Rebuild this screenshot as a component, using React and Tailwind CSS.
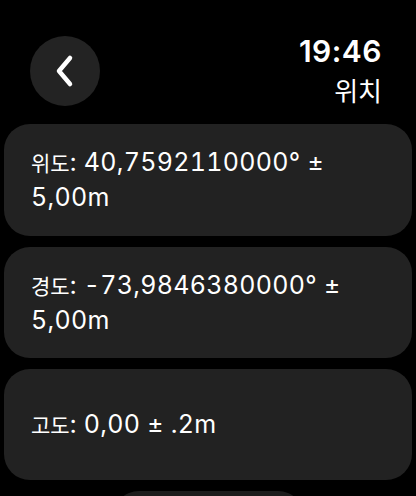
export default function App() {
  return (
    <div className="w-[416px] h-[496px] bg-black overflow-hidden text-white font-['Inter','Noto_Sans_CJK_KR',sans-serif]">
      <div className="flex justify-between items-start pl-[30px] pr-[34px] pt-[36px] h-[124px]">
        <button className="w-[70px] h-[70px] rounded-full bg-[#232323] flex items-center justify-center">
          <svg width="30" height="36" viewBox="0 0 30 36" fill="none">
            <path
              d="M20 5 L9 18 L20 31"
              stroke="white"
              strokeWidth="4.5"
              strokeLinecap="round"
              strokeLinejoin="round"
            />
          </svg>
        </button>
        <div className="flex flex-col items-end">
          <div className="text-[30px] leading-[30px] font-semibold tracking-[0.5px]">19:46</div>
          <div className="text-[26px] leading-[30px] mt-[9px] font-['Noto_Sans_CJK_KR',sans-serif]">위치</div>
        </div>
      </div>
      <div className="flex flex-col gap-[11px] px-[4px]">
        <div className="h-[112px] rounded-[26px] bg-[#222222] flex items-center pl-[27px] pr-[20px]">
          <div className="text-[25px] leading-[35px] tracking-[0.3px] tabular-nums">
            <span className="text-[21px] tracking-normal font-['Noto_Sans_CJK_KR',sans-serif]">위도</span>: 40,7592110000° ±
            <br />
            5,00m
          </div>
        </div>
        <div className="h-[111px] rounded-[26px] bg-[#222222] flex items-center pl-[27px] pr-[20px]">
          <div className="text-[25px] leading-[35px] tracking-[0.3px] tabular-nums">
            <span className="text-[21px] tracking-normal font-['Noto_Sans_CJK_KR',sans-serif]">경도</span>: -73,9846380000° ±
            <br />
            5,00m
          </div>
        </div>
        <div className="h-[111px] rounded-[26px] bg-[#222222] flex items-center pl-[27px] pr-[20px]">
          <div className="text-[25px] leading-[35px] tracking-[0.3px] tabular-nums">
            <span className="text-[21px] tracking-normal font-['Noto_Sans_CJK_KR',sans-serif]">고도</span>: 0,00 ± .2m
          </div>
        </div>
        <div className="self-center w-[191px] h-[60px] rounded-[26px] bg-[#1c1c1c]" />
      </div>
    </div>
  );
}
